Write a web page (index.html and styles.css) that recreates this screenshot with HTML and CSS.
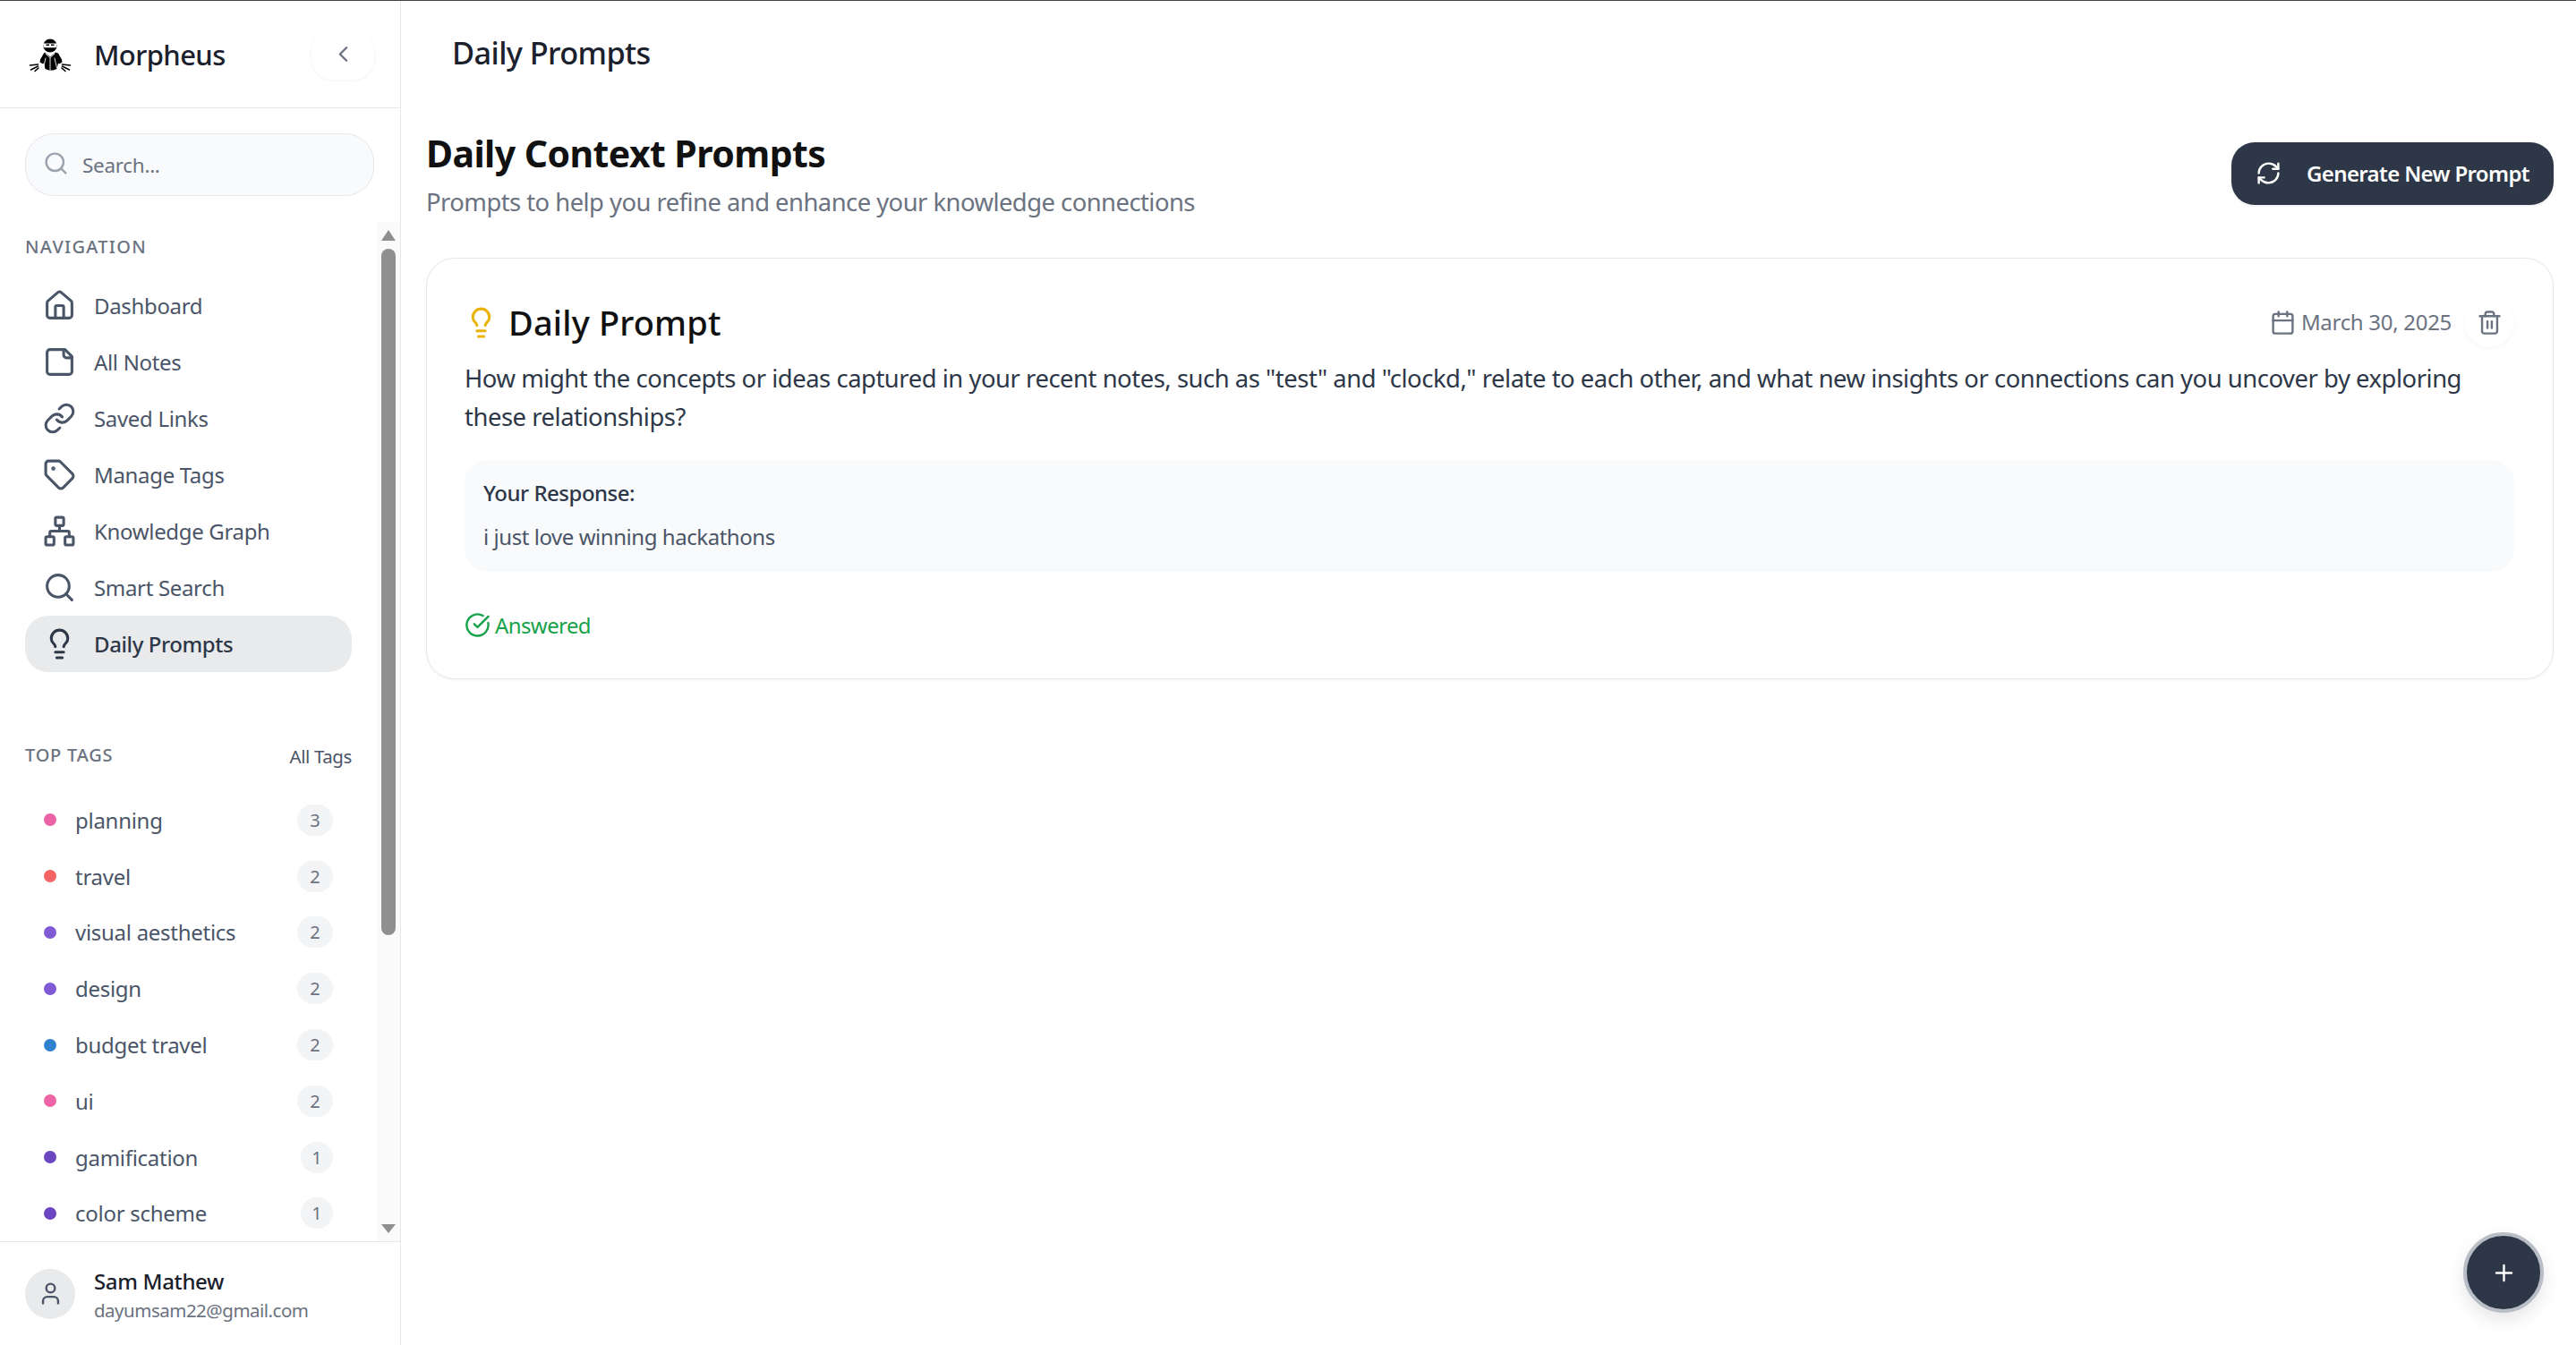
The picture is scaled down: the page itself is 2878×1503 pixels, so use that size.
FILE: index.html
```html
<!DOCTYPE html>
<html lang="en">
<head>
    <meta charset="UTF-8">
    <title>Daily Prompts - Morpheus</title>
    <link rel="stylesheet" href="styles.css">
</head>
<body>
    <div class="app">
        <aside class="sidebar">
            <div class="brand">
                <svg class="logo" viewBox="0 0 48 38">
                    <circle cx="24" cy="8" r="7.6" fill="#000"/>
                    <path d="M16.5 5.5h15v3.2l-1.2 1.6h-12.6l-1.2-1.6z" fill="#fff"/>
                    <path d="M19.5 6.6h3.5v1.4h-3.500zM25 6.6h3.5v1.4H25z" fill="#000"/>
                    <path d="M18 15.5l6 5 6-5 3 1 4 7 .5 3-3.500 2-1-1-1.500 6.500-4 1.500h-5l-4-1.500-1.500-6.500-1 1-3.500-2 .5-3 4-7z" fill="#000"/>
                    <path d="M19 17l5 4.500 5-4.500M24 21.500V35M19 22l-2.500 11M29 22l2.500 11" fill="none" stroke="#fff" stroke-width="0.9"/>
                    <path d="M10.500 29L1.500 30M10.500 31L2.500 35M11 33L7 36.500M37.500 29L46.500 30M37.500 31L45.500 35M37 33L41 36.500" fill="none" stroke="#000" stroke-width="1.6"/>
                </svg>
                <span class="brand-name">Morpheus</span>
                <button class="collapse-btn">
                    <svg class="icon-sm" viewBox="0 0 24 24"><path d="m15 18-6-6 6-6"/></svg>
                </button>
            </div>

            <div class="search-wrap">
                <div class="search">
                    <svg class="search-icon" viewBox="0 0 24 24"><circle cx="11" cy="11" r="8"/><path d="m21 21-4.300-4.300"/></svg>
                    <span>Search...</span>
                </div>
            </div>

            <div class="side-scroll">
                <div class="side-label">NAVIGATION</div>
                <nav class="nav">
                    <a class="nav-item">
                        <svg class="icon" viewBox="0 0 24 24"><path d="M15 21v-8a1 1 0 0 0-1-1h-4a1 1 0 0 0-1 1v8"/><path d="M3 10a2 2 0 0 1 .709-1.528l7-5.999a2 2 0 0 1 2.582 0l7 5.999A2 2 0 0 1 21 10v9a2 2 0 0 1-2 2H5a2 2 0 0 1-2-2z"/></svg>
                        Dashboard
                    </a>
                    <a class="nav-item">
                        <svg class="icon" viewBox="0 0 24 24"><path d="M16 3H5a2 2 0 0 0-2 2v14a2 2 0 0 0 2 2h14a2 2 0 0 0 2-2V8Z"/><path d="M15 3v4a2 2 0 0 0 2 2h4"/></svg>
                        All Notes
                    </a>
                    <a class="nav-item">
                        <svg class="icon" viewBox="0 0 24 24"><path d="M10 13a5 5 0 0 0 7.540.54l3-3a5 5 0 0 0-7.070-7.070l-1.720 1.710"/><path d="M14 11a5 5 0 0 0-7.540-.54l-3 3a5 5 0 0 0 7.070 7.070l1.710-1.710"/></svg>
                        Saved Links
                    </a>
                    <a class="nav-item">
                        <svg class="icon" viewBox="0 0 24 24"><path d="M12.586 2.586A2 2 0 0 0 11.172 2H4a2 2 0 0 0-2 2v7.172a2 2 0 0 0 .586 1.414l8.704 8.704a2.426 2.426 0 0 0 3.420 0l6.580-6.580a2.426 2.426 0 0 0 0-3.420z"/><circle cx="7.500" cy="7.500" r=".5" fill="currentColor"/></svg>
                        Manage Tags
                    </a>
                    <a class="nav-item">
                        <svg class="icon" viewBox="0 0 24 24"><rect x="16" y="16" width="6" height="6" rx="1"/><rect x="2" y="16" width="6" height="6" rx="1"/><rect x="9" y="2" width="6" height="6" rx="1"/><path d="M5 16v-3a1 1 0 0 1 1-1h12a1 1 0 0 1 1 1v3"/><path d="M12 12V8"/></svg>
                        Knowledge Graph
                    </a>
                    <a class="nav-item">
                        <svg class="icon" viewBox="0 0 24 24"><circle cx="11" cy="11" r="8"/><path d="m21 21-4.300-4.300"/></svg>
                        Smart Search
                    </a>
                    <a class="nav-item active">
                        <svg class="icon" viewBox="0 0 24 24"><path d="M15 14c.2-1 .7-1.700 1.500-2.500 1-.9 1.500-2.200 1.500-3.500A6 6 0 0 0 6 8c0 1 .2 2.200 1.500 3.500.7.7 1.300 1.500 1.500 2.500"/><path d="M9 18h6"/><path d="M10 22h4"/></svg>
                        Daily Prompts
                    </a>
                </nav>

                <div class="tags-head">
                    <span class="side-label">TOP TAGS</span>
                    <a class="all-tags">All Tags</a>
                </div>
                <ul class="tags">
                    <li class="tag"><i class="dot pink"></i><span class="tag-name">planning</span><span class="count">3</span></li>
                    <li class="tag"><i class="dot red"></i><span class="tag-name">travel</span><span class="count">2</span></li>
                    <li class="tag"><i class="dot purple"></i><span class="tag-name">visual aesthetics</span><span class="count">2</span></li>
                    <li class="tag"><i class="dot purple"></i><span class="tag-name">design</span><span class="count">2</span></li>
                    <li class="tag"><i class="dot blue"></i><span class="tag-name">budget travel</span><span class="count">2</span></li>
                    <li class="tag"><i class="dot pink"></i><span class="tag-name">ui</span><span class="count">2</span></li>
                    <li class="tag"><i class="dot violet"></i><span class="tag-name">gamification</span><span class="count one">1</span></li>
                    <li class="tag"><i class="dot violet"></i><span class="tag-name">color scheme</span><span class="count one">1</span></li>
                </ul>

                <div class="scrollbar">
                    <span class="arrow up"></span>
                    <span class="thumb"></span>
                    <span class="arrow down"></span>
                </div>
            </div>

            <div class="user">
                <div class="avatar">
                    <svg class="icon-user" viewBox="0 0 24 24"><path d="M19 21v-2a4 4 0 0 0-4-4H9a4 4 0 0 0-4 4v2"/><circle cx="12" cy="7" r="4"/></svg>
                </div>
                <div class="user-info">
                    <div class="user-name">Sam Mathew</div>
                    <div class="user-email">dayumsam22@gmail.com</div>
                </div>
            </div>
        </aside>

        <main class="main">
            <header class="topbar">Daily Prompts</header>
            <section class="content">
                <div class="page-head">
                    <div>
                        <h1>Daily Context Prompts</h1>
                        <p class="subtitle">Prompts to help you refine and enhance your knowledge connections</p>
                    </div>
                    <button class="generate-btn">
                        <svg class="icon-btn" viewBox="0 0 24 24"><path d="M3 12a9 9 0 0 1 9-9 9.750 9.750 0 0 1 6.740 2.740L21 8"/><path d="M21 3v5h-5"/><path d="M21 12a9 9 0 0 1-9 9 9.750 9.750 0 0 1-6.740-2.740L3 16"/><path d="M8 16H3v5"/></svg>
                        Generate New Prompt
                    </button>
                </div>

                <article class="card">
                    <div class="card-head">
                        <div class="card-title">
                            <svg class="icon-bulb" viewBox="0 0 24 24"><path d="M15 14c.2-1 .7-1.700 1.500-2.500 1-.9 1.500-2.200 1.500-3.500A6 6 0 0 0 6 8c0 1 .2 2.200 1.500 3.500.7.7 1.300 1.500 1.500 2.500"/><path d="M9 18h6"/><path d="M10 22h4"/></svg>
                            <h2>Daily Prompt</h2>
                        </div>
                        <div class="card-meta">
                            <svg class="icon-cal" viewBox="0 0 24 24"><path d="M8 2v4"/><path d="M16 2v4"/><rect x="3" y="4" width="18" height="18" rx="2"/><path d="M3 10h18"/></svg>
                            <span class="date">March 30, 2025</span>
                            <button class="trash-btn">
                                <svg class="icon-trash" viewBox="0 0 24 24"><path d="M3 6h18"/><path d="M19 6v14c0 1-1 2-2 2H7c-1 0-2-1-2-2V6"/><path d="M8 6V4c0-1 1-2 2-2h4c1 0 2 1 2 2v2"/><path d="M10 11v6"/><path d="M14 11v6"/></svg>
                            </button>
                        </div>
                    </div>
                    <p class="question">How might the concepts or ideas captured in your recent notes, such as "test" and "clockd," relate to each other, and what new insights or connections can you uncover by exploring these relationships?</p>
                    <div class="response">
                        <div class="response-label">Your Response:</div>
                        <div class="response-text">i just love winning hackathons</div>
                    </div>
                    <div class="answered">
                        <svg class="icon-check" viewBox="0 0 24 24"><path d="M21.801 10A10 10 0 1 1 17 3.335"/><path d="m9 11 3 3L22 4"/></svg>
                        Answered
                    </div>
                </article>
            </section>
        </main>
    </div>

    <button class="fab">
        <svg class="icon-plus" viewBox="0 0 24 24"><path d="M5 12h14"/><path d="M12 5v14"/></svg>
    </button>
</body>
</html>
```

FILE: styles.css
```css
* {
    margin: 0;
    padding: 0;
    box-sizing: border-box;
}

body {
    font-family: 'Noto Sans', 'Open Sans', sans-serif;
    background: white;
    color: #1a202c;
    height: 1503px;
    overflow: hidden;
    border-top: 1px solid #444;
}

svg {
    fill: none;
    stroke: currentColor;
    stroke-width: 2;
    stroke-linecap: round;
    stroke-linejoin: round;
    flex-shrink: 0;
}

button {
    font-family: inherit;
    border: none;
    cursor: pointer;
}

.app {
    display: flex;
    height: 1502px;
}

/* sidebar */
.sidebar {
    width: 448px;
    flex-shrink: 0;
    display: flex;
    flex-direction: column;
    border-right: 1px solid #e5e7eb;
}

.brand {
    height: 120px;
    flex-shrink: 0;
    display: flex;
    align-items: center;
    padding: 0 29px 0 32px;
    border-bottom: 1px solid #e5e7eb;
}

.logo {
    width: 48px;
    height: 38px;
    stroke: none;
    margin-top: 2px;
}

.brand-name {
    font-size: 31px;
    font-weight: 500;
    color: #1a202c;
    margin-left: 25px;
    letter-spacing: -0.6px;
}

.collapse-btn {
    margin-left: auto;
    width: 70px;
    height: 56px;
    border-radius: 24px;
    background: white;
    color: #6b7280;
    box-shadow: 0 1px 4px rgba(0, 0, 0, 0.05);
    display: flex;
    align-items: center;
    justify-content: center;
}

.icon-sm {
    width: 29px;
    height: 29px;
}

.search-wrap {
    flex-shrink: 0;
    padding: 28px 29px 29px 28px;
}

.search {
    height: 70px;
    border: 1px solid #e5e7eb;
    border-radius: 32px;
    background: #f9fafb;
    display: flex;
    align-items: center;
    padding-left: 19px;
    gap: 15px;
    font-size: 22.5px;
    color: #6b7280;
    letter-spacing: -0.3px;
}

.search-icon {
    width: 29px;
    height: 29px;
    margin-top: -3px;
    color: #9ca3af;
}

.side-scroll {
    flex: 1;
    position: relative;
    overflow: hidden;
    padding-top: 16px;
}

.side-label {
    font-size: 20px;
    font-weight: 500;
    color: #6b7280;
    letter-spacing: 1.3px;
    line-height: 24px;
    padding-left: 28px;
}

.nav {
    display: flex;
    flex-direction: column;
    width: 365px;
    margin: 22px 0 0 28px;
}

.nav-item {
    height: 63px;
    display: flex;
    align-items: center;
    gap: 20px;
    padding-left: 20px;
    border-radius: 26px;
    font-size: 24px;
    color: #4a5568;
    letter-spacing: -0.33px;
}

.nav-item.active {
    background: #e9eaec;
    color: #2d3748;
    font-weight: 500;
    letter-spacing: -0.4px;
}

.icon {
    width: 37px;
    height: 37px;
}

.tags-head {
    width: 393px;
    display: flex;
    justify-content: space-between;
    align-items: center;
    margin-top: 79px;
}

.tags-head .side-label {
    letter-spacing: 0.8px;
}

.all-tags {
    font-size: 20.5px;
    color: #4a5568;
    letter-spacing: -0.4px;
    position: relative;
    top: 1px;
}

.tags {
    list-style: none;
    margin: 27px 0 0 28px;
    width: 365px;
}

.tag {
    height: 62.8px;
    display: flex;
    align-items: center;
    padding: 0 21px;
}

.dot {
    width: 14px;
    height: 14px;
    border-radius: 50%;
    margin-right: 21px;
}

.pink { background: #ed64a6; }
.red { background: #f56565; }
.purple { background: #805ad5; }
.blue { background: #3182ce; }
.violet { background: #6b46c1; }

.tag-name {
    font-size: 24px;
    color: #4a5568;
    letter-spacing: -0.28px;
}

.count {
    margin-left: auto;
    width: 40px;
    height: 35px;
    border-radius: 18px;
    background: #f3f4f6;
    color: #6b7280;
    font-size: 20px;
    display: flex;
    align-items: center;
    justify-content: center;
}

.count.one {
    width: 36px;
}

.scrollbar {
    position: absolute;
    top: 0;
    right: 0;
    bottom: 0;
    width: 26px;
    background: #fafafa;
    display: flex;
    flex-direction: column;
    align-items: center;
}

.thumb {
    width: 16px;
    height: 767px;
    margin-top: 9px;
    background: #8f8f8f;
    border-radius: 8px;
}

.arrow {
    width: 0;
    height: 0;
    border-left: 8px solid transparent;
    border-right: 8px solid transparent;
}

.arrow.up {
    margin-top: 9px;
    border-bottom: 12px solid #8f8f8f;
}

.arrow.down {
    margin-top: auto;
    margin-bottom: 9px;
    border-top: 10px solid #8f8f8f;
}

.user {
    height: 116px;
    flex-shrink: 0;
    border-top: 1px solid #e5e7eb;
    display: flex;
    align-items: center;
    gap: 21px;
    padding-left: 28px;
}

.avatar {
    width: 56px;
    height: 56px;
    border-radius: 50%;
    background: #e9eaec;
    color: #4a5568;
    display: flex;
    align-items: center;
    justify-content: center;
}

.icon-user {
    width: 29px;
    height: 29px;
}

.user-info {
    padding-top: 5px;
}

.user-name {
    font-size: 24px;
    font-weight: 500;
    color: #1a202c;
    letter-spacing: -0.35px;
    line-height: 33px;
}

.user-email {
    font-size: 20.5px;
    color: #6b7280;
    letter-spacing: -0.5px;
    line-height: 33px;
}

/* main */
.main {
    flex: 1;
    min-width: 0;
}

.topbar {
    height: 119px;
    padding: 0 0 4px 57px;
    display: flex;
    align-items: center;
    font-size: 34.3px;
    font-weight: 500;
    color: #1a202c;
    letter-spacing: -0.6px;
}

.content {
    padding: 0 25px 0 28px;
}

.page-head {
    display: flex;
    justify-content: space-between;
    align-items: flex-start;
    height: 168px;
    padding-top: 23px;
}

h1 {
    font-size: 41px;
    font-weight: 700;
    line-height: 56px;
    color: #111;
    letter-spacing: -0.57px;
}

.subtitle {
    margin-top: 5px;
    font-size: 27.4px;
    color: #6b7280;
    line-height: 44px;
    letter-spacing: -0.53px;
}

.generate-btn {
    width: 360px;
    height: 70px;
    margin-top: 16px;
    border-radius: 26px;
    background: #2d3748;
    color: white;
    font-size: 24px;
    font-weight: 600;
    letter-spacing: -0.63px;
    display: flex;
    align-items: center;
    gap: 28px;
    padding-left: 27px;
    padding-bottom: 2px;
    box-shadow: 0 1px 3px rgba(0, 0, 0, 0.1);
}

.icon-btn {
    width: 29px;
    height: 29px;
}

.card {
    height: 471px;
    border: 1px solid #e5e7eb;
    border-radius: 32px;
    padding: 42px 43px 0 42px;
    box-shadow: 0 1px 3px rgba(0, 0, 0, 0.06);
}

.card-head {
    display: flex;
    justify-content: space-between;
    align-items: center;
    height: 58px;
}

.card-title {
    display: flex;
    align-items: center;
    gap: 12px;
}

.icon-bulb {
    width: 37px;
    height: 37px;
    color: #eab308;
}

h2 {
    font-size: 38px;
    font-weight: 500;
    color: #111;
    letter-spacing: 0.15px;
}

.card-meta {
    display: flex;
    align-items: center;
    font-size: 24px;
    color: #6b7280;
    letter-spacing: -0.3px;
}

.date {
    margin-top: -2px;
}

.icon-cal {
    width: 29px;
    height: 29px;
    margin-right: 6px;
}

.trash-btn {
    width: 56px;
    height: 56px;
    margin-left: 14px;
    border-radius: 50%;
    background: white;
    color: #6b7280;
    box-shadow: 0 1px 4px rgba(0, 0, 0, 0.05);
    display: flex;
    align-items: center;
    justify-content: center;
}

.icon-trash {
    width: 29px;
    height: 29px;
}

.question {
    margin-top: 12px;
    font-size: 27.4px;
    line-height: 43px;
    color: #2d3748;
    letter-spacing: -0.455px;
}

.response {
    margin-top: 27px;
    height: 125px;
    background: #f9fafb;
    border-radius: 26px;
    padding: 19px 21px 0;
}

.response-label {
    font-size: 24px;
    font-weight: 500;
    color: #2d3748;
    letter-spacing: -0.5px;
    line-height: 36px;
}

.response-text {
    margin-top: 13px;
    font-size: 24px;
    color: #4a5568;
    letter-spacing: -0.45px;
    line-height: 36px;
}

.answered {
    margin-top: 43px;
    display: flex;
    align-items: center;
    gap: 5px;
    font-size: 24px;
    color: #16a34a;
    letter-spacing: -0.6px;
}

.icon-check {
    width: 29px;
    height: 29px;
}

.fab {
    position: fixed;
    right: 36px;
    bottom: 36px;
    width: 90px;
    height: 90px;
    border-radius: 50%;
    background: #2d3748;
    border: 4px solid #b9bec6;
    color: white;
    box-shadow: 0 8px 20px rgba(0, 0, 0, 0.1);
    display: flex;
    align-items: center;
    justify-content: center;
}

.icon-plus {
    width: 29px;
    height: 29px;
}
```
